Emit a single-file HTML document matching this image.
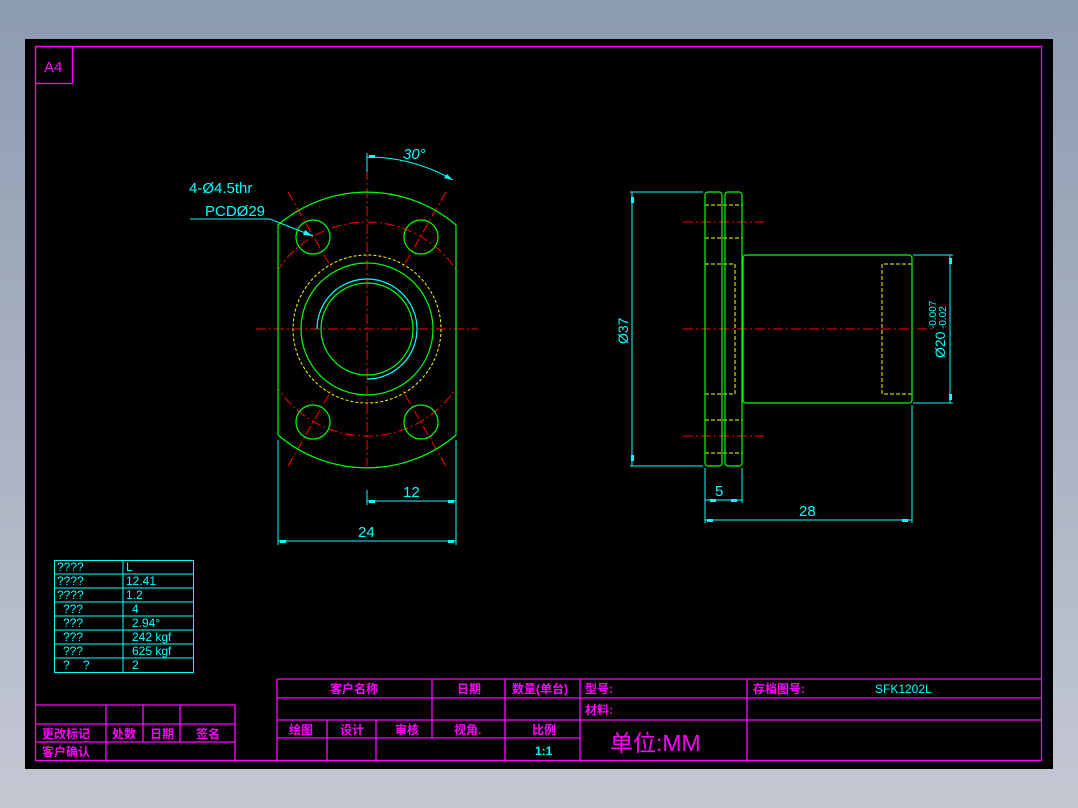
<!DOCTYPE html>
<html><head><meta charset="utf-8"><style>
html,body{margin:0;padding:0;width:1078px;height:808px;overflow:hidden;background:linear-gradient(#8d9bb0,#c4c8d3);}
svg{position:absolute;left:0;top:0}
.cj{font-family:"Liberation Sans","WenQuanYi Zen Hei","Noto Sans CJK SC",sans-serif;font-size:12px;fill:#ff00ff;font-weight:bold}
.cy{font-family:"Liberation Sans",sans-serif;fill:#00ffff}
</style></head><body>
<svg width="1078" height="808" xmlns="http://www.w3.org/2000/svg">
<rect x="25" y="39" width="1028" height="730" fill="#000"/>
<g fill="none" stroke="#ff00ff" stroke-width="1.3">
<rect x="35.5" y="46.5" width="1006" height="714"/>
<rect x="35.5" y="46.5" width="37" height="37"/>
<!-- left title block -->
<path d="M35 705H235V761M35 724H235M35 742H235M106 705V761M143 705V742M180 705V742"/>
<!-- right title block -->
<path d="M277 679H1042M277 698H1042M277 720H1042M277 738H580M277 679V761M432 679V738M505 679V761M580 679V761M747 679V761M327 720V761M376 720V761"/>
</g>
<text x="44" y="72" font-family="Liberation Sans,sans-serif" font-size="15" fill="#ff00ff">A4</text>
<!-- data table -->
<g fill="none" stroke="#00ffff" stroke-width="1">
<rect x="54.5" y="560.5" width="139" height="112"/>
<path d="M54 574H193M54 588H193M54 602H193M54 616H193M54 630H193M54 644H193M54 658H193M123 560V672"/>
</g>
<g class="cy" font-size="12">
<text x="57" y="571">????</text><text x="126" y="571">L</text>
<text x="57" y="585">????</text><text x="126" y="585">12.41</text>
<text x="57" y="599">????</text><text x="126" y="599">1.2</text>
<text x="63" y="613">???</text><text x="132" y="613">4</text>
<text x="63" y="627">???</text><text x="132" y="627">2.94°</text>
<text x="63" y="641">???</text><text x="132" y="641">242 kgf</text>
<text x="63" y="655">???</text><text x="132" y="655">625 kgf</text>
<text x="63" y="669">?&#160;&#160;&#160;&#160;?</text><text x="132" y="669">2</text>
</g>
<!-- title texts -->
<g class="cj">
<text x="42" y="738">更改标记</text><text x="112" y="738">处数</text><text x="150" y="738">日期</text><text x="196" y="738">签名</text>
<text x="42" y="756">客户确认</text>
<text x="330" y="693">客户名称</text><text x="457" y="693">日期</text><text x="512" y="693">数量(单台)</text>
<text x="585" y="693">型号:</text><text x="753" y="693">存档图号:</text>
<text x="585" y="714">材料:</text>
<text x="289" y="734">绘图</text><text x="340" y="734">设计</text><text x="395" y="734">审核</text><text x="454" y="734">视角.</text><text x="532" y="734">比例</text>
<text x="610" y="751" font-size="23" font-weight="normal">单位:MM</text>
</g>
<text x="875" y="693" class="cy" font-size="12">SFK1202L</text>
<text x="535" y="755" class="cy" font-size="12" font-weight="bold">1:1</text>

<!-- FRONT VIEW -->
<defs><clipPath id="cp"><rect x="278" y="150" width="178" height="330"/></clipPath></defs>
<g fill="none" stroke="#ff0000" stroke-width="1" stroke-dasharray="10 3 2 3">
<path d="M256 329H478M367 170V466"/>
<circle cx="367" cy="329" r="107" clip-path="url(#cp)"/>
<path d="M288 192L331 267M446 192L403 267M288 466L331 391M446 466L403 391"/>
</g>
<g fill="none" stroke="#00ff00" stroke-width="1.2">
<path d="M278 225A137 137 0 0 1 456 225V435A137 137 0 0 1 278 435Z"/>
<circle cx="367" cy="329" r="66"/><circle cx="367" cy="329" r="46"/>
<circle cx="313" cy="237" r="17"/><circle cx="421" cy="237" r="17"/>
<circle cx="313" cy="422" r="17"/><circle cx="421" cy="422" r="17"/>
</g>
<circle cx="367" cy="329" r="74" fill="none" stroke="#ffff00" stroke-dasharray="3 2"/>
<path d="M317 329A50 50 0 1 1 367 379" fill="none" stroke="#00ffff" stroke-width="1.2"/>
<g fill="none" stroke="#00ffff" stroke-width="1">
<path d="M367 153V172M367 157A172 172 0 0 1 453 180"/>
<path d="M190 219H270L313 236"/>
<path d="M367 490V505M367 501H456M278 440V545M456 440V545M278 541H456"/>
</g>
<g fill="#00ffff"><path d="M453 180l-9-2 3-4z"/><path d="M313 236l-10-1 2-5z"/>
<rect x="369" y="155" width="6" height="3"/><rect x="369" y="500" width="6" height="3"/><rect x="448" y="500" width="6" height="3"/><rect x="280" y="540" width="6" height="3"/><rect x="448" y="540" width="6" height="3"/></g>
<g class="cy" font-size="15">
<text x="403" y="159" font-style="italic">30°</text>
<text x="189" y="193">4-Ø4.5thr</text><text x="205" y="216">PCDØ29</text>
<text x="403" y="497">12</text><text x="358" y="537">24</text>
<text x="715" y="496">5</text><text x="799" y="516">28</text>
</g>

<!-- SIDE VIEW -->
<g fill="none" stroke="#ff0000" stroke-width="1" stroke-dasharray="10 3 2 3">
<path d="M683 222H764M683 436H764M683 329H935"/>
</g>
<g fill="none" stroke="#ffff00" stroke-width="1" stroke-dasharray="4 2">
<path d="M705 205H742M705 238H742M705 420H742M705 453H742"/>
<path d="M705 264H735V394H705"/>
<path d="M912 264H882V394H912"/>
</g>
<g fill="none" stroke="#00ff00" stroke-width="1.2">
<rect x="705" y="192" width="17" height="274" rx="3"/>
<rect x="725" y="192" width="17" height="274" rx="3"/>
<rect x="743" y="255" width="169" height="148" rx="3"/>
</g>
<g fill="none" stroke="#00ffff" stroke-width="1">
<path d="M630 192H703M630 466H703M632 192V466"/>
<path d="M913 255H953M913 403H953M950 255V403"/>
<path d="M705 468V503M742 468V503M705 500H742M912 405V523M705 503V523M705 520H912"/>
</g>
<g fill="#00ffff"><rect x="631" y="197" width="3" height="6"/><rect x="631" y="455" width="3" height="6"/><rect x="949" y="258" width="3" height="6"/><rect x="949" y="394" width="3" height="6"/>
<rect x="710" y="499" width="6" height="3"/><rect x="731" y="499" width="6" height="3"/><rect x="707" y="519" width="6" height="3"/><rect x="902" y="519" width="6" height="3"/></g>
<g class="cy" font-size="14">
<text transform="translate(628 344) rotate(-90)">Ø37</text>
<text transform="translate(945 358) rotate(-90)">Ø20</text>
<text transform="translate(936 329) rotate(-90)" font-size="10">-0.007</text>
<text transform="translate(946 329) rotate(-90)" font-size="10">-0.02</text>
</g>
</svg>
</body></html>
